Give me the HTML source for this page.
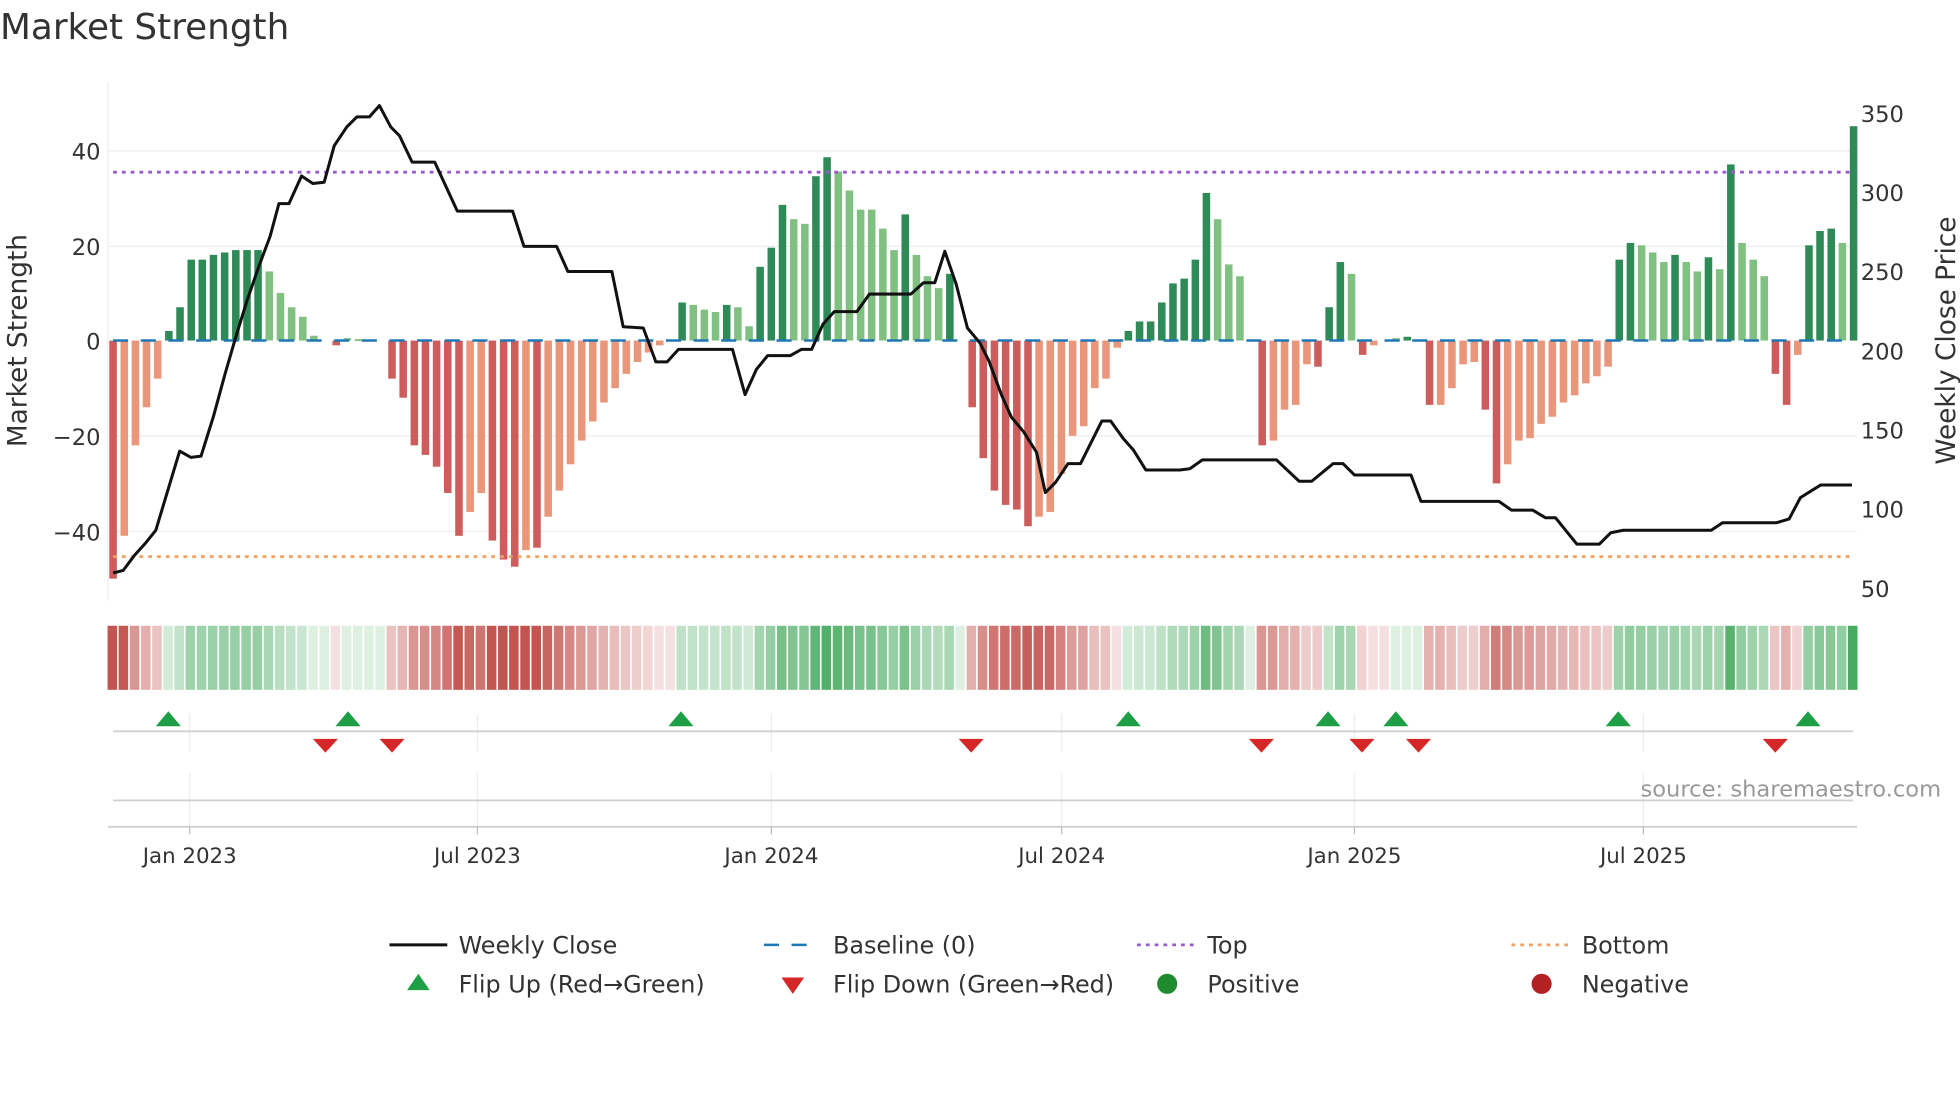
<!DOCTYPE html>
<html><head><meta charset="utf-8"><style>
html,body{margin:0;padding:0;background:#fff;width:1960px;height:1102px;overflow:hidden}
svg{display:block;font-family:"DejaVu Sans","Liberation Sans",sans-serif}
</style></head><body>
<svg id="s" width="1960" height="1102" viewBox="0 0 1560 877" xmlns="http://www.w3.org/2000/svg">
<text x="0" y="31" font-size="28.5" fill="#333">Market Strength</text>
<g stroke="#ebedf0" stroke-width="1">
<line x1="86" x2="1478" y1="120" y2="120"/><line x1="86" x2="1478" y1="196" y2="196"/>
<line x1="86" x2="1478" y1="347" y2="347"/><line x1="86" x2="1478" y1="423" y2="423"/>
<line x1="86" x2="86" y1="65" y2="478"/>
</g>
<g id="bars"></g>
<line x1="90" x2="1475" y1="271" y2="271" stroke="#1f77b4" stroke-width="2" stroke-dasharray="12,10"/>
<line x1="90" x2="1475" y1="137" y2="137" stroke="#9b59d0" stroke-width="2.2" stroke-dasharray="3,4"/>
<line x1="90" x2="1475" y1="443" y2="443" stroke="#f0a060" stroke-width="2.2" stroke-dasharray="3,4"/>
<polyline id="close" fill="none" stroke="#111" stroke-width="2.4" stroke-linejoin="round"/>
<g font-size="18" fill="#333" text-anchor="end">
<text x="80" y="127">40</text><text x="80" y="203">20</text><text x="80" y="278">0</text>
<text x="80" y="354">−20</text><text x="80" y="430">−40</text></g>
<g font-size="18" fill="#333">
<text x="1481" y="97">350</text><text x="1481" y="160">300</text><text x="1481" y="223">250</text>
<text x="1481" y="286">200</text><text x="1481" y="349">150</text><text x="1481" y="412">100</text><text x="1481" y="475">50</text></g>
<text transform="translate(21,271) rotate(-90)" font-size="21" fill="#333" text-anchor="middle">Market Strength</text>
<text transform="translate(1556,271) rotate(-90)" font-size="21" fill="#333" text-anchor="middle">Weekly Close Price</text>
<g id="band"></g>
<g stroke="#ebedf0" stroke-width="1">
<line x1="151" x2="151" y1="568" y2="598"/><line x1="380" x2="380" y1="568" y2="598"/><line x1="614" x2="614" y1="568" y2="598"/><line x1="845" x2="845" y1="568" y2="598"/><line x1="1078" x2="1078" y1="568" y2="598"/><line x1="1308" x2="1308" y1="568" y2="598"/>
<line x1="151" x2="151" y1="615" y2="658"/><line x1="380" x2="380" y1="615" y2="658"/><line x1="614" x2="614" y1="615" y2="658"/><line x1="845" x2="845" y1="615" y2="658"/><line x1="1078" x2="1078" y1="615" y2="658"/><line x1="1308" x2="1308" y1="615" y2="658"/>
</g>
<line x1="90" x2="1475" y1="582" y2="582" stroke="#d0d0d0" stroke-width="1.5"/>
<line x1="90" x2="1475" y1="637" y2="637" stroke="#d0d0d0" stroke-width="1.5"/>
<line x1="86" x2="1478" y1="658" y2="658" stroke="#cfcfcf" stroke-width="1.5"/>
<g stroke="#bbb" stroke-width="1"><line x1="151" x2="151" y1="658" y2="664"/><line x1="380" x2="380" y1="658" y2="664"/><line x1="614" x2="614" y1="658" y2="664"/><line x1="845" x2="845" y1="658" y2="664"/><line x1="1078" x2="1078" y1="658" y2="664"/><line x1="1308" x2="1308" y1="658" y2="664"/></g>
<g id="mk"></g>
<text x="1545" y="634" font-size="18" fill="#999" text-anchor="end">source: sharemaestro.com</text>
<g font-size="17" fill="#333" text-anchor="middle">
<text x="151" y="687">Jan 2023</text><text x="380" y="687">Jul 2023</text><text x="614" y="687">Jan 2024</text>
<text x="845" y="687">Jul 2024</text><text x="1078" y="687">Jan 2025</text><text x="1308" y="687">Jul 2025</text></g>
<g font-size="19" fill="#333">
<line x1="310" x2="356" y1="752" y2="752" stroke="#111" stroke-width="2.4"/><text x="365" y="759">Weekly Close</text>
<line x1="608" x2="652" y1="752" y2="752" stroke="#1f77b4" stroke-width="2" stroke-dasharray="12,10"/><text x="663" y="759">Baseline (0)</text>
<line x1="905" x2="950" y1="752" y2="752" stroke="#9b59d0" stroke-width="2.2" stroke-dasharray="3,4"/><text x="961" y="759">Top</text>
<line x1="1203" x2="1248" y1="752" y2="752" stroke="#f0a060" stroke-width="2.2" stroke-dasharray="3,4"/><text x="1259" y="759">Bottom</text>
<polygon points="324,788 342,788 333,775" fill="#1e9e45"/><text x="365" y="790">Flip Up (Red→Green)</text>
<polygon points="622,778 640,778 631,791" fill="#d62728"/><text x="663" y="790">Flip Down (Green→Red)</text>
<circle cx="929" cy="783" r="8" fill="#1e8c2e"/><text x="961" y="790">Positive</text>
<circle cx="1227" cy="783" r="8" fill="#b22222"/><text x="1259" y="790">Negative</text>
</g>
</svg>
<script>
var d="-50D -41L -22L -14L -8L 2D 7D 17D 17D 18D 18.5D 19D 19D 19D 14.5L 10L 7L 5L 1L 0L -1D 0.5L 0.3L 0L 0L -8D -12D -22D -24D -26.5D -32D -41D -36L -32L -42D -46D -47.5D -44L -43.5D -37L -31.5L -26L -21L -17L -13L -10L -7L -4.5L -2.5L -1L 0L 8D 7.5L 6.5L 6L 7.5D 7L 3L 15.5D 19.5D 28.5D 25.5L 24.5L 34.5D 38.5D 35.5L 31.5L 27.5L 27.5L 23.5L 19L 26.5D 18L 13.5L 11L 14D 0L -14D -24.7D -31.5D -34.5D -35.5D -39D -37L -36L -28L -20L -18L -10L -8L -1.5L 2D 4D 4D 8D 12D 13D 17D 31D 25.5L 16L 13.5L 0L -22D -21L -14.5L -13.5L -5L -5.5D 7D 16.5D 14L -3D -1L 0L 0.5L 0.8D 0L -13.5D -13.5L -10L -5L -4.5L -14.5D -30D -26L -21L -20.5L -17.5L -16L -13L -11.5L -9L -7.5L -5.5L 17D 20.5D 20L 18.5L 16.5L 18D 16.5L 14.5L 17.5D 15L 37D 20.5L 17L 13.5L -7D -13.5D -3L 20D 23D 23.5D 20.5L 45D".split(" ");
var b="",band="";
function mix(a,c,t){return "rgb("+a.map(function(v,i){return Math.round(255+(v-255)*t)}).join(",")+")"}
var prev=0;
d.forEach(function(s,i){var v=parseFloat(s),k=s.slice(-1),x=90+i*8.88;
 if(v!==0){var y0=271,y1=271-v*3.79;var col=v>0?(k=="D"?"#2e8a57":"#80c080"):(k=="D"?"#cd5c5c":"#e9967a");
 b+='<rect x="'+(x-3).toFixed(1)+'" y="'+Math.min(y0,y1).toFixed(1)+'" width="6" height="'+Math.max(Math.abs(y1-y0),1.5).toFixed(1)+'" fill="'+col+'"/>';}
 var sv=v!==0?v:prev; if(v!==0)prev=v;
 var t=0.2+0.8*Math.min(Math.abs(sv)/42,1); if(v===0||Math.abs(v)<2)t=0.18;
 var c=sv>=0?mix([70,170,95],0,t):mix([195,85,80],0,t);
 band+='<rect x="'+(x-4.44).toFixed(1)+'" y="498" width="7.6" height="51" fill="'+c+'"/>';
});
document.getElementById("bars").innerHTML=b;document.getElementById("band").innerHTML=band;
var p="90,456 98,454 107,442 116,432 124,422 143,359 152,364 160,363 170,331 179,298 188,267 197,238 206,212 215,188 222,162 230,162 240,140 249,146 258,145 266,116 276,101 284,93 294,93 302,84 311,101 318,108 328,129 346,129 364,168 408,168 417,196 443,196 452,216 487,216 496,260 512,261 522,288 531,288 540,278 583,278 593,314 602,294 611,283 629,283 638,278 646,278 655,258 664,248 682,248 692,234 725,234 735,225 744,225 752,200 761,226 770,261 780,273 787,287 797,314 805,332 815,344 825,360 832,392 840,384 850,369 860,369 877,335 884,335 894,349 902,358 912,374 939,374 947,373 957,366 1016,366 1034,383 1044,383 1061,369 1069,369 1078,378 1123,378 1131,399 1193,399 1203,406 1220,406 1230,412 1238,412 1255,433 1273,433 1282,424 1292,422 1362,422 1371,416 1414,416 1424,413 1433,396 1449,386 1467,386 1474,386";
document.getElementById("close").setAttribute("points",p);
var m="";
[134,277,542,898,1057,1111,1288,1439].forEach(function(x){m+='<polygon points="'+(x-10)+',578 '+(x+10)+',578 '+x+',566" fill="#1e9e45"/>'});
[259,312,773,1004,1084,1129,1413].forEach(function(x){m+='<polygon points="'+(x-10)+',588 '+(x+10)+',588 '+x+',599" fill="#d62728"/>'});
document.getElementById("mk").innerHTML=m;
</script>
</body></html>
